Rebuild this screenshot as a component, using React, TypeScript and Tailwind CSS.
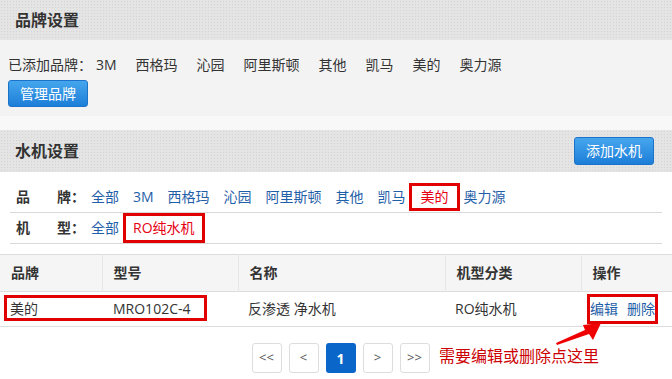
import React from 'react'

const addedBrands = ['3M', '西格玛', '沁园', '阿里斯顿', '其他', '凯马', '美的', '奥力源']
const filterBrands = ['全部', '3M', '西格玛', '沁园', '阿里斯顿', '其他', '凯马', '美的', '奥力源']

function SectionHeader({ title, className, children }: { title: string, className: string, children?: React.ReactNode }) {
  return (
    <div className={`flex items-center justify-between bg-[#e4e4e4] bg-[radial-gradient(#d4d4d4_0.8px,transparent_0.9px)] [background-size:3px_3px] pl-[15px] pr-[18px] ${className}`}>
      <h2 className="text-[16px] font-bold leading-[20px] text-[#333]">{title}</h2>
      {children}
    </div>
  )
}

function BlueButton({ label, className }: { label: string, className?: string }) {
  return (
    <button className={`flex items-center justify-center w-[80px] rounded-[3px] border border-[#1a73c9] bg-gradient-to-b from-[#45a6ee] to-[#1c7ed8] text-[14px] leading-[20px] text-white ${className || ''}`}>
      {label}
    </button>
  )
}

function PageBtn({ label, active }: { label: string, active?: boolean }) {
  return (
    <div className={`flex items-center justify-center w-[30px] h-[30px] rounded-[3px] ${active ? 'bg-[#0a66c8] text-white font-bold text-[14px]' : 'border border-[#dddddd] bg-white text-[#555] text-[13px]'}`}>
      {label}
    </div>
  )
}

export default function App() {
  return (
    <div className="relative w-[672px] h-[379px] overflow-hidden bg-white font-['Open_Sans','Noto_Sans_CJK_SC',sans-serif] text-[#333]">
      <SectionHeader title="品牌设置" className="h-[40px]" />
      <div className="h-[76px] bg-[#f3f3f3] px-[8px] pt-[15px]">
        <div className="flex items-center text-[14px] leading-[20px]">
          <span>已添加品牌：</span>
          <div className="flex gap-[19px] ml-[4px]">
            {addedBrands.map(b => <span key={b}>{b}</span>)}
          </div>
        </div>
        <BlueButton label="管理品牌" className="h-[27px] mt-[5px]" />
      </div>
      <div className="h-[14px] bg-[#f8f8f8]" />

      <SectionHeader title="水机设置" className="h-[42px]">
        <BlueButton label="添加水机" className="h-[28px]" />
      </SectionHeader>

      <div className="px-[10px]">
        <div className="h-[41px] pt-[15px] border-b border-[#d9d9d9] flex items-start text-[14px] leading-[20px]">
          <div className="flex w-[81px] pl-[6px] font-bold">
            <span>品</span><span className="ml-[27px]">牌：</span>
          </div>
          <div className="flex gap-[14px] text-[#1f5ea8]">
            {filterBrands.map(b => <span key={b} className={b === '美的' ? 'text-[#e60012] mx-[1px]' : ''}>{b}</span>)}
          </div>
        </div>
        <div className="h-[31px] border-b border-[#d9d9d9] flex items-center text-[14px] leading-[20px]">
          <div className="flex w-[81px] pl-[6px] font-bold">
            <span>机</span><span className="ml-[27px]">型：</span>
          </div>
          <div className="flex gap-[14px] text-[#1f5ea8]">
            <span>全部</span>
            <span className="text-[#e60012]">RO纯水机</span>
          </div>
        </div>
      </div>

      <table className="mt-[10px] w-[672px] border-collapse text-[14px] leading-[20px] table-fixed">
        <colgroup>
          <col className="w-[102px]" />
          <col className="w-[136px]" />
          <col className="w-[207px]" />
          <col className="w-[136px]" />
          <col className="w-[91px]" />
        </colgroup>
        <thead>
          <tr className="h-[37px] bg-[#f5f5f5] border-t border-b border-[#dddddd]">
            {['品牌', '型号', '名称', '机型分类', '操作'].map((h, i) => (
              <th key={h} className={`text-left font-bold pl-[11px] ${i > 0 ? 'border-l border-[#e6e6e6]' : ''}`}>{h}</th>
            ))}
          </tr>
        </thead>
        <tbody>
          <tr className="h-[35px] border-b border-[#dddddd]">
            <td className="pl-[10px]">美的</td>
            <td className="pl-[11px]">MRO102C-4</td>
            <td className="pl-[10px]">反渗透 净水机</td>
            <td className="pl-[10px]">RO纯水机</td>
            <td className="pl-[9px] text-[#1f5ea8]">
              <span>编辑</span><span className="ml-[9px]">删除</span>
            </td>
          </tr>
        </tbody>
      </table>

      <div className="mt-[16px] flex justify-center gap-[7px] pl-[9px]">
        <PageBtn label="<<" />
        <PageBtn label="<" />
        <PageBtn label="1" active />
        <PageBtn label=">" />
        <PageBtn label=">>" />
      </div>

      {/* annotations drawn over the screenshot */}
      <div className="absolute left-[409px] top-[183px] w-[51px] h-[28px] border-[3px] border-[#e00000]" />
      <div className="absolute left-[123px] top-[213px] w-[82px] h-[30px] border-[3px] border-[#e00000]" />
      <div className="absolute left-[4px] top-[295px] w-[203px] h-[26px] border-[3px] border-[#e00000]" />
      <div className="absolute left-[587px] top-[294px] w-[71px] h-[30px] border-[3px] border-[#e00000]" />
      <svg className="absolute left-0 top-0" width="672" height="379" viewBox="0 0 672 379">
        <polygon points="556,343 585,330 583,325 601,323 593,340 589,334 557,345" fill="#ee0000" />
      </svg>
      <div className="absolute left-[439px] top-[345px] text-[16px] leading-[22px] text-[#cc0000] whitespace-nowrap">
        需要编辑或删除点这里
      </div>
    </div>
  )
}
